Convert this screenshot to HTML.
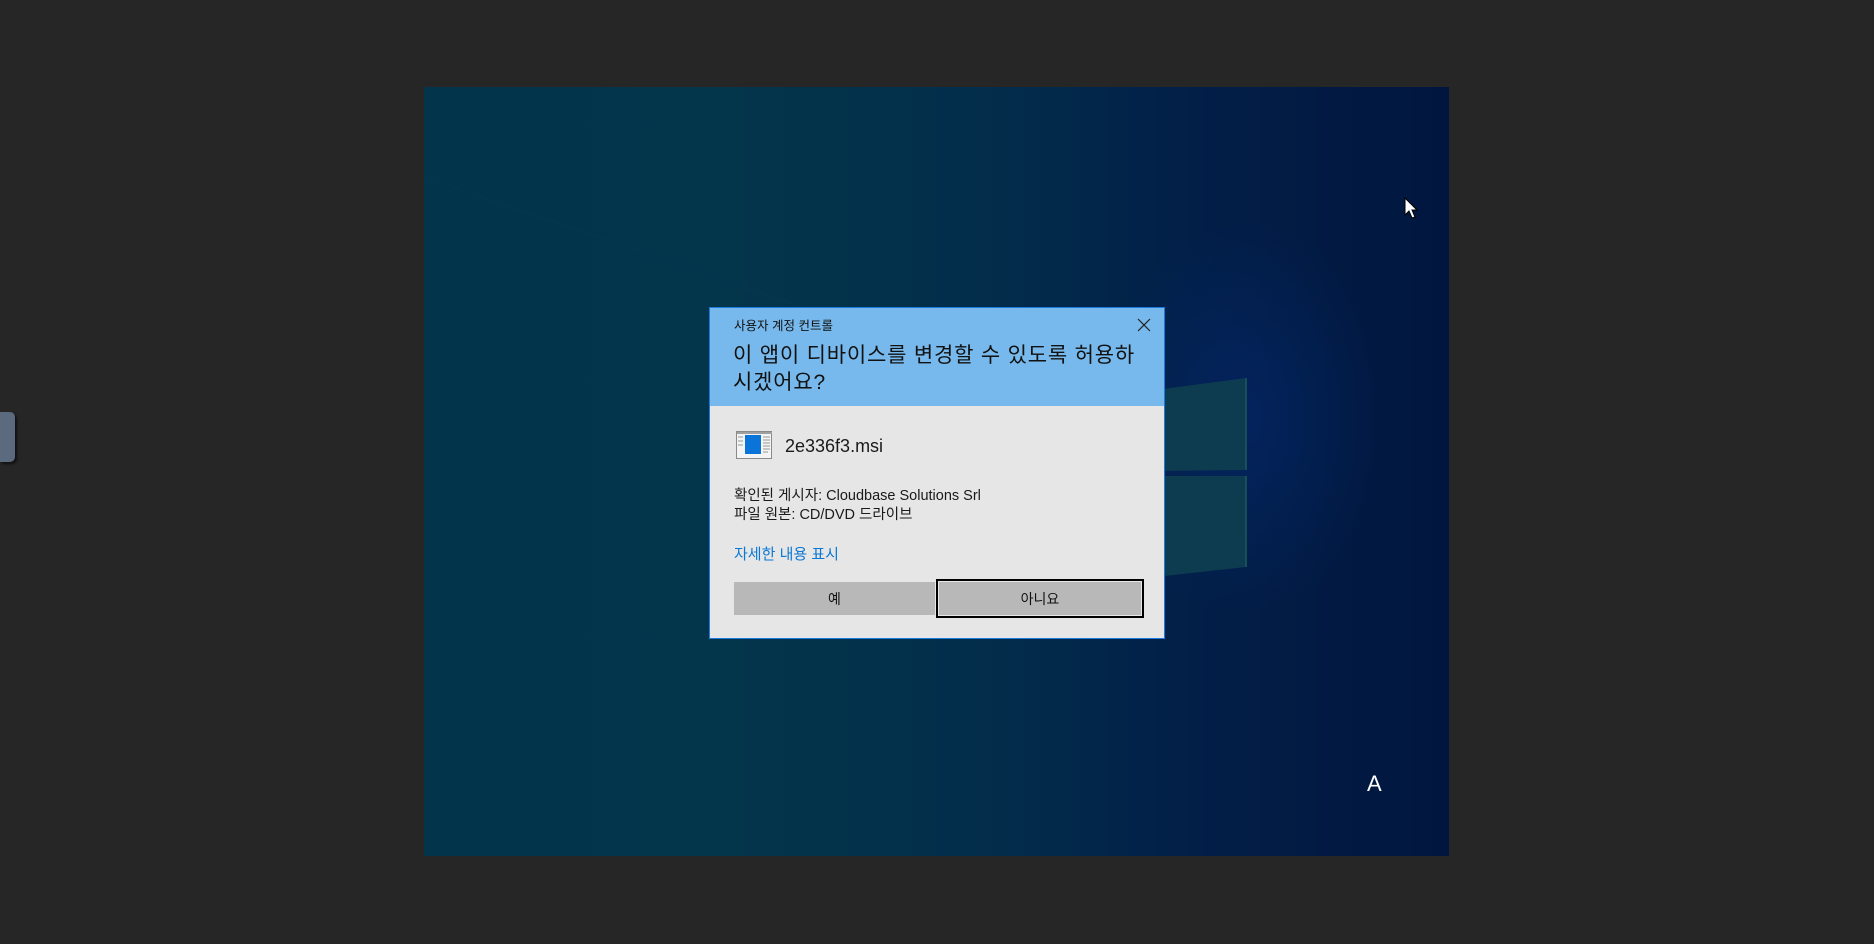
<!DOCTYPE html>
<html><head><meta charset="utf-8">
<style>
*{margin:0;padding:0;box-sizing:border-box}
html,body{width:1874px;height:944px;overflow:hidden;background:#262626;font-family:"Liberation Sans","Noto Sans CJK KR","NanumGothic",sans-serif}
.abs{position:absolute}
#desk{left:424px;top:87px;width:1025px;height:769px;overflow:hidden;
background:
radial-gradient(ellipse 200px 280px at 820px 330px, rgba(5,40,110,0.6), rgba(0,0,0,0) 70%),
linear-gradient(90deg,#02344b 0%,#03354b 30%,#032d4b 55%,#021f48 75%,#01163e 100%);}
#tab{left:0;top:412px;width:15px;height:50px;background:#5c6a80;border-radius:0 5px 5px 0;box-shadow:2px 2px 2px #111}
#dlg{left:709px;top:307px;width:456px;height:332px;background:#e6e6e6;border:1px solid #1a7ae0}
#hdr{left:0;top:0;width:454px;height:98px;background:#77b9ec}
.t{color:#111;white-space:nowrap}
</style></head><body>
<div id="desk" class="abs">
<svg class="abs" style="left:0;top:0" width="1025" height="769">
<polygon points="640,315 822,291 822,383 640,385" fill="#0d3b50"/>
<polygon points="640,389 822,389 822,480 640,500" fill="#0d3b50"/>
<line x1="822" y1="291" x2="822" y2="383" stroke="#1d5a5c" stroke-width="1.5"/>
<line x1="822" y1="389" x2="822" y2="480" stroke="#1d5a5c" stroke-width="1.5"/>
<line x1="0" y1="90" x2="640" y2="310" stroke="#0a4060" stroke-width="1" opacity="0.3"/>
<path d="M981 111 L981 128 L985 124 L988 131 L991 130 L988 123 L993 123 Z" fill="#fff" stroke="#000" stroke-width="1"/>
</svg>
<div class="abs" style="left:943px;top:684px;color:#fff;font-size:22px">A</div>
</div>
<div id="tab" class="abs"></div>
<div id="dlg" class="abs">
<div id="hdr" class="abs"></div>
<div class="abs t" style="left:24px;top:7px;font-size:12.5px">사용자 계정 컨트롤</div>
<svg class="abs" style="left:427px;top:10px" width="14" height="14"><path d="M1 1L13 13M13 1L1 13" stroke="#222" stroke-width="1.2"/></svg>
<div class="abs t" style="left:23px;top:34px;font-size:21px;line-height:27px;letter-spacing:0.8px">이 앱이 디바이스를 변경할 수 있도록 허용하<br>시겠어요?</div>
<svg class="abs" style="left:26px;top:123px" width="37" height="30">
<rect x="0.5" y="0.5" width="35" height="27" fill="#f4f4f4" stroke="#8a8a8a"/>
<rect x="1" y="1" width="35" height="2" fill="#a0a0a0"/>
<rect x="9" y="4" width="16" height="19" fill="#0a74d8"/>
<g stroke="#999" stroke-width="1"><line x1="27" y1="6" x2="34" y2="6"/><line x1="27" y1="9" x2="34" y2="9"/><line x1="27" y1="12" x2="34" y2="12"/><line x1="27" y1="15" x2="34" y2="15"/><line x1="27" y1="18" x2="34" y2="18"/><line x1="27" y1="21" x2="32" y2="21"/>
<line x1="2" y1="6" x2="7" y2="6"/><line x1="2" y1="10" x2="7" y2="10"/><line x1="2" y1="14" x2="7" y2="14"/></g>
</svg>
<div class="abs t" style="left:75px;top:128px;font-size:18px;color:#1a1a1a">2e336f3.msi</div>
<div class="abs t" style="left:24px;top:179px;font-size:14.5px;line-height:19px;color:#1a1a1a">확인된 게시자: Cloudbase Solutions Srl<br>파일 원본: CD/DVD 드라이브</div>
<div class="abs t" style="left:24px;top:235px;font-size:15px;color:#0a78d4">자세한 내용 표시</div>
<div class="abs" style="left:24px;top:274px;width:201px;height:33px;background:#b8b8b8"></div>
<div class="abs t" style="left:24px;top:281px;width:201px;text-align:center;font-size:14px">예</div>
<div class="abs" style="left:226px;top:271px;width:208px;height:39px;background:#b8b8b8;border:2px solid #000;box-shadow:inset 0 0 0 1px #e6e6e6"></div>
<div class="abs t" style="left:226px;top:281px;width:208px;text-align:center;font-size:14px">아니요</div>
</div>
</body></html>
